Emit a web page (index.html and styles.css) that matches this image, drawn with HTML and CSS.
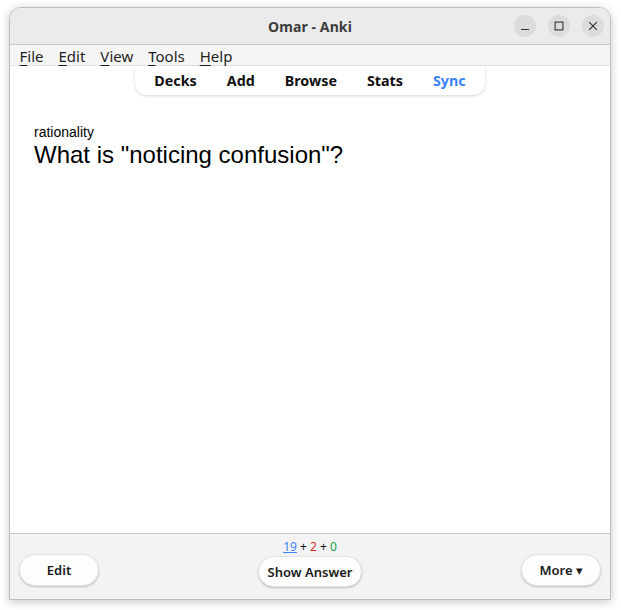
FILE: index.html
```html
<!DOCTYPE html>
<html>
<head>
<meta charset="utf-8">
<title>Omar - Anki</title>
<link rel="stylesheet" href="styles.css">
</head>
<body>
<div class="window">
  <div class="titlebar">
    <div class="title">Omar - Anki</div>
    <div class="controls">
      <span class="ctl"><svg width="10" height="10" viewBox="0 0 10 10"><path d="M1 8.5H9" stroke="#333" stroke-width="1.2"/></svg></span>
      <span class="ctl"><svg width="10" height="10" viewBox="0 0 10 10"><rect x="1.1" y="1.1" width="7.8" height="7.8" fill="none" stroke="#333" stroke-width="1.1"/></svg></span>
      <span class="ctl"><svg width="10" height="10" viewBox="0 0 10 10"><path d="M1.2 1.2L8.8 8.8M8.8 1.2L1.2 8.8" stroke="#333" stroke-width="1.2"/></svg></span>
    </div>
  </div>
  <div class="menubar">
    <span class="menu"><u>F</u>ile</span>
    <span class="menu"><u>E</u>dit</span>
    <span class="menu"><u>V</u>iew</span>
    <span class="menu"><u>T</u>ools</span>
    <span class="menu"><u>H</u>elp</span>
  </div>
  <div class="main">
    <div class="toolbar-wrap">
      <nav class="toolbar">
        <span class="tb">Decks</span>
        <span class="tb">Add</span>
        <span class="tb">Browse</span>
        <span class="tb">Stats</span>
        <span class="tb sync">Sync</span>
      </nav>
    </div>
    <div class="card">
      <div class="deck">rationality</div>
      <div class="question">What is "noticing confusion"?</div>
    </div>
  </div>
  <div class="bottombar">
    <div class="side left"><button class="btn">Edit</button></div>
    <div class="center">
      <div class="counts"><span class="new">19</span> + <span class="lrn">2</span> + <span class="rev">0</span></div>
      <button class="btn show">Show Answer</button>
    </div>
    <div class="side right"><button class="btn">More &#9662;</button></div>
  </div>
</div>
</body>
</html>
```
FILE: styles.css
```css
html, body {
  margin: 0;
  padding: 0;
  background: #ffffff;
}
body {
  padding: 7px 10px 10px 9px;
  font-family: "Noto Sans", "DejaVu Sans", sans-serif;
}
.window {
  width: 600px;
  height: 591px;
  border: 1px solid #bdbdbd;
  border-radius: 12px 12px 0 0;
  box-shadow: 0 2px 10px rgba(0,0,0,0.22);
  display: flex;
  flex-direction: column;
  overflow: hidden;
  background: #fff;
}
.titlebar {
  height: 36px;
  flex: none;
  background: #ebebeb;
  border-bottom: 1px solid #c9c9c9;
  display: flex;
  align-items: center;
  justify-content: center;
  position: relative;
}
.title {
  font-weight: 700;
  font-size: 14px;
  color: #3d3d3d;
  letter-spacing: 0.1px;
}
.controls {
  position: absolute;
  right: 6px;
  top: 7px;
  display: flex;
  gap: 12px;
}
.ctl {
  width: 22px;
  height: 22px;
  border-radius: 50%;
  background: #dcdcdc;
  display: flex;
  align-items: center;
  justify-content: center;
}
.menubar {
  height: 20px;
  flex: none;
  background: #f5f5f5;
  border-bottom: 1px solid #e2e2e2;
  display: flex;
  align-items: center;
  padding-left: 2px;
  font-size: 15px;
  color: #1e1e1e;
}
.menu {
  padding: 0 7.5px;
  line-height: 20px;
  position: relative;
  top: 1px;
}
.menu u {
  text-decoration-thickness: 1px;
  text-underline-offset: 3px;
}
.main {
  flex: 1;
  background: #fff;
  display: flex;
  flex-direction: column;
}
.toolbar-wrap {
  display: flex;
  justify-content: center;
  padding-left: 0;
}
.toolbar {
  display: flex;
  padding: 0 4px;
  height: 29px;
  align-items: center;
  border-radius: 0 0 12px 12px;
  background: #fff;
  box-shadow: 0 1px 3px rgba(0,0,0,0.18);
}
.tb {
  padding: 0 15px;
  font-weight: 700;
  font-size: 14.3px;
  color: #111;
}
.tb.sync {
  color: #3b82f6;
}
.card {
  padding: 29px 0 0 24px;
  font-family: "Liberation Sans", Arial, sans-serif;
  color: #000;
}
.deck {
  font-size: 14px;
  line-height: 16px;
}
.question {
  font-size: 24px;
  line-height: 29px;
}
.bottombar {
  height: 65px;
  flex: none;
  background: #f3f3f3;
  border-top: 1px solid #c4c4c4;
  display: flex;
  align-items: flex-start;
  justify-content: space-between;
  padding: 0 9px 0 9px;
}
.side {
  width: 104px;
  padding-top: 20px;
  display: flex;
}
.side.right {
  justify-content: flex-end;
}
.center {
  display: flex;
  flex-direction: column;
  align-items: center;
  padding-top: 5px;
}
.counts {
  font-size: 12px;
  line-height: 16px;
  color: #111;
  margin-bottom: 1px;
}
.new { color: #3b82f6; text-decoration: underline; }
.lrn { color: #dc2626; }
.rev { color: #16a34a; }
.btn {
  font-family: "Noto Sans", "DejaVu Sans", sans-serif;
  font-size: 13px;
  font-weight: 600;
  color: #1a1a1a;
  background: #fdfdfd;
  border: 1px solid #e4e4e4;
  border-radius: 16px;
  height: 32px;
  width: 80px;
  box-shadow: 0 1px 2px rgba(0,0,0,0.22);
  padding: 0;
}
.btn.show {
  width: 104px;
  height: 31px;
}
```
